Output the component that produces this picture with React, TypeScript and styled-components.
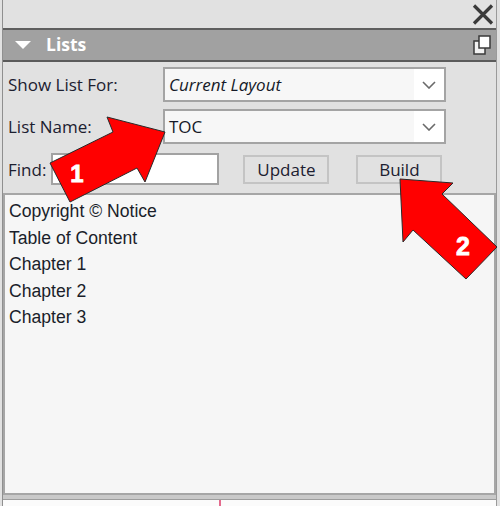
import React from "react";
import styled, { createGlobalStyle } from "styled-components";

const Global = createGlobalStyle`
  html, body { margin: 0; padding: 0; }
  body {
    background: #e1e1e1;
    width: 500px;
    height: 506px;
    overflow: hidden;
    font-family: "Open Sans", "Liberation Sans", sans-serif;
  }
`;

const Stage = styled.div`
  position: relative;
  width: 500px;
  height: 506px;
`;

const Panel = styled.div`
  margin-left: 2px;
  width: 493px;
  height: 506px;
  border-left: 1px solid #8f8f8f;
  border-right: 1px solid #9a9a9a;
  display: flex;
  flex-direction: column;
  background: #e1e1e1;
`;

const TopBar = styled.div`
  box-sizing: border-box;
  height: 30px;
  border-bottom: 2px solid #5e5e5e;
  display: flex;
  justify-content: flex-end;
  align-items: flex-start;
  padding: 4px 2px 0 0;
`;

const Header = styled.div`
  height: 32px;
  box-sizing: border-box;
  background: #a1a1a1;
  border-bottom: 2px solid #5b5b5b;
  display: flex;
  align-items: center;
  padding: 0 4px 0 12px;
`;

const Title = styled.span`
  font-family: "Open Sans", sans-serif;
  font-weight: 700;
  font-size: 17.5px;
  color: #ffffff;
  margin-left: 15px;
  flex: 1;
  position: relative;
  top: -1px;
`;

const Form = styled.div`
  padding: 5px 0 0 5px;
  height: 131px;
  box-sizing: border-box;
  display: flex;
  flex-direction: column;
`;

const FieldRow = styled.div<{ $gap: number }>`
  display: grid;
  grid-template-columns: 155px 283px;
  align-items: center;
  margin-bottom: ${(p) => p.$gap}px;
`;

const Label = styled.span`
  font-size: 17px;
  color: #1c2030;
  white-space: nowrap;
`;

const Select = styled.div`
  height: 35px;
  box-sizing: border-box;
  border: 2px solid #a4a4a4;
  display: flex;
`;

const SelectValue = styled.div<{ $italic?: boolean }>`
  flex: 1;
  background: #f7f7f7;
  display: flex;
  align-items: center;
  padding-left: 4px;
  font-size: 17px;
  font-style: ${(p) => (p.$italic ? "italic" : "normal")};
  color: #151a28;
`;

const DropButton = styled.div`
  width: 30px;
  background: #ffffff;
  display: flex;
  align-items: center;
  justify-content: center;
`;

const FindRow = styled.div`
  display: flex;
  align-items: center;
  height: 32px;
`;

const FindInput = styled.div`
  width: 168px;
  height: 32px;
  box-sizing: border-box;
  border: 2px solid #a2a2a2;
  background: #ffffff;
  margin-left: 5px;
`;

const Button = styled.div<{ $ml: number }>`
  width: 86px;
  height: 29px;
  box-sizing: border-box;
  border: 2px solid #c4c4c4;
  background: #e1e1e1;
  margin-left: ${(p) => p.$ml}px;
  display: flex;
  align-items: center;
  justify-content: center;
  font-size: 17px;
  color: #1c2030;
`;

const ListBox = styled.div`
  height: 302px;
  box-sizing: border-box;
  border: 2px solid #a6a6a6;
  background: #f6f6f6;
  padding: 3px 0 0 4px;
`;

const ListItem = styled.div`
  font-family: "Liberation Sans", Arial, sans-serif;
  font-size: 17.6px;
  line-height: 26.6px;
  color: #1a1e2a;
`;

const Band = styled.div`
  height: 4px;
  background: #c9c9c9;
  border-bottom: 1px solid #9d9d9d;
`;

const Footer = styled.div`
  flex: 1;
  background: #fbfbfb;
  display: flex;
`;

const FooterMark = styled.div`
  width: 2px;
  margin-left: 216px;
  background: #e46b8e;
`;

const Overlay = styled.svg`
  position: absolute;
  left: 0;
  top: 0;
  width: 500px;
  height: 506px;
  pointer-events: none;
`;

const CloseIcon = () => (
  <svg width="22" height="21" viewBox="0 0 22 21">
    <path d="M2 1.5 L20 19.5 M20 1.5 L2 19.5" stroke="#3a3a3a" strokeWidth="3.2" fill="none" />
  </svg>
);

const RestoreIcon = () => (
  <svg width="19" height="21" viewBox="0 0 19 21">
    <rect x="1" y="6" width="11" height="13" fill="#f2f2f2" stroke="#3a3a3a" strokeWidth="1.5" />
    <rect x="6" y="1" width="11" height="12" fill="#ffffff" stroke="#3a3a3a" strokeWidth="1.5" />
  </svg>
);

const Triangle = () => (
  <svg width="16" height="9" viewBox="0 0 16 9">
    <path d="M0 0 L16 0 L8 8 Z" fill="#ffffff" />
  </svg>
);

const Chevron = () => (
  <svg width="14" height="8" viewBox="0 0 14 8">
    <path d="M1 1 L7 7 L13 1" stroke="#6a6a6a" strokeWidth="1.6" fill="none" />
  </svg>
);

const items = ["Copyright © Notice", "Table of Content", "Chapter 1", "Chapter 2", "Chapter 3"];

export default function App() {
  return (
    <Stage>
      <Global />
      <Panel>
        <TopBar>
          <CloseIcon />
        </TopBar>
        <Header>
          <Triangle />
          <Title>Lists</Title>
          <RestoreIcon />
        </Header>
        <Form>
          <FieldRow $gap={7}>
            <Label>Show List For:</Label>
            <Select>
              <SelectValue $italic>Current Layout</SelectValue>
              <DropButton>
                <Chevron />
              </DropButton>
            </Select>
          </FieldRow>
          <FieldRow $gap={9}>
            <Label>List Name:</Label>
            <Select>
              <SelectValue>TOC</SelectValue>
              <DropButton>
                <Chevron />
              </DropButton>
            </Select>
          </FieldRow>
          <FindRow>
            <Label>Find:</Label>
            <FindInput />
            <Button $ml={24}>Update</Button>
            <Button $ml={27}>Build</Button>
          </FindRow>
        </Form>
        <ListBox>
          {items.map((t) => (
            <ListItem key={t}>{t}</ListItem>
          ))}
        </ListBox>
        <Band />
        <Footer>
          <FooterMark />
        </Footer>
      </Panel>
      <Overlay viewBox="0 0 500 506">
        <polygon
          points="165,132 107,117 113,132 50,163 70,202 137,168 145,182"
          fill="#ff0000"
          stroke="#2a2a2a"
          strokeWidth="1"
          strokeLinejoin="miter"
        />
        <text x="77" y="182" textAnchor="middle" fontFamily="Liberation Sans, Arial, sans-serif" fontWeight="700" fontSize="24" fill="#ffffff" stroke="#ffffff" strokeWidth="0.8">1</text>
        <polygon
          points="400,179 453,183 442,194 497,247 466,279 413,230 403,242"
          fill="#ff0000"
          stroke="#2a2a2a"
          strokeWidth="1"
          strokeLinejoin="miter"
        />
        <text x="463" y="255" textAnchor="middle" fontFamily="Liberation Sans, Arial, sans-serif" fontWeight="700" fontSize="25" fill="#ffffff" stroke="#ffffff" strokeWidth="0.8">2</text>
      </Overlay>
    </Stage>
  );
}
